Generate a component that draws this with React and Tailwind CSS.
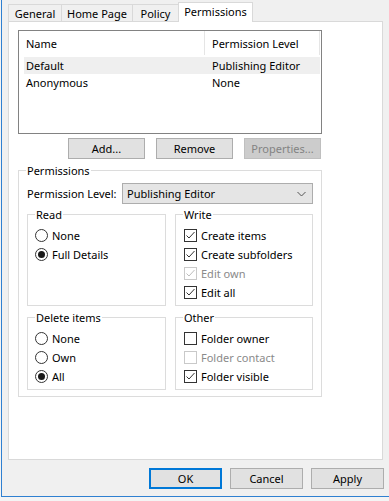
import React from "react";

function Check({ checked, disabled }) {
  return (
    <span
      className={`w-[13px] h-[13px] border ${
        disabled ? "border-[#c9c9c9]" : "border-[#333333]"
      } bg-white flex items-center justify-center shrink-0`}
    >
      {checked && (
        <svg width="11" height="11" viewBox="0 0 11 11">
          <polyline
            points="1.5,5.5 4,8 9.5,2"
            fill="none"
            stroke={disabled ? "#bdbdbd" : "#333333"}
            strokeWidth="1"
          />
        </svg>
      )}
    </span>
  );
}

function Radio({ checked }) {
  return (
    <span className="w-[13px] h-[13px] rounded-full border border-[#333333] bg-white flex items-center justify-center shrink-0">
      {checked && <span className="w-[7px] h-[7px] rounded-full bg-[#1a1a1a]" />}
    </span>
  );
}

function Item({ children, label, disabled, pl }) {
  return (
    <div className={`h-[19px] flex items-center gap-[4px] ${pl}`}>
      {children}
      <span className={disabled ? "text-[#8a8a8a]" : "text-black"}>{label}</span>
    </div>
  );
}

function Group({ label, className, children }) {
  return (
    <div className={`relative border border-[#dcdcdc] ${className}`}>
      <span className="absolute left-[7px] -top-[8px] px-[1px] bg-white leading-[15px]">
        {label}
      </span>
      {children}
    </div>
  );
}

function Btn({ children, className }) {
  return (
    <div
      className={`h-[21px] flex items-center justify-center border ${className}`}
    >
      {children}
    </div>
  );
}

export default function App() {
  return (
    <div className="w-[389px] h-[501px] bg-[#f4f4f4] font-['Noto_Sans',sans-serif] text-[11px] leading-[15px] text-black overflow-hidden">
      <div className="ml-[1px] w-[388px] h-[497px] border-l border-b border-[#2f80d1] bg-[#f0f0f0] flex flex-col">
        {/* Tabs */}
        <div className="h-[21px] pl-[6px] flex items-end relative z-10">
          <div className="w-[53px] h-[17px] border-t border-l border-[#d9d9d9] flex items-center justify-center">
            General
          </div>
          <div className="w-[71px] h-[17px] border-t border-l border-[#d9d9d9] flex items-center justify-center">
            Home Page
          </div>
          <div className="w-[46px] h-[17px] border-t border-l border-[#d9d9d9] flex items-center justify-center">
            Policy
          </div>
          <div className="w-[75px] h-[20px] -mb-[1px] border-t border-l border-r border-[#d9d9d9] bg-white flex items-center justify-center pb-[2px]">
            Permissions
          </div>
        </div>

        {/* Panel */}
        <div className="ml-[6px] w-[375px] h-[439px] border border-[#d9d9d9] bg-white flex flex-col">
          {/* List */}
          <div className="ml-[9px] mt-[8px] w-[304px] h-[104px] border border-[#828282] flex flex-col">
            <div className="h-[26px] flex">
              <div className="w-[185px] pl-[7px] pt-[5px]">Name</div>
              <div className="w-[1px] h-[24px] bg-[#e5e5e5]" />
              <div className="w-[114px] pl-[7px] pt-[5px]">Permission Level</div>
              <div className="w-[1px] h-[24px] bg-[#e5e5e5]" />
            </div>
            <div className="ml-[5px] w-[296px] h-[17px] flex items-center bg-[#efefef]">
              <div className="w-[180px] pl-[2px]">Default</div>
              <div className="pl-[8px]">Publishing Editor</div>
            </div>
            <div className="ml-[5px] w-[296px] h-[17px] flex items-center">
              <div className="w-[180px] pl-[2px]">Anonymous</div>
              <div className="pl-[8px]">None</div>
            </div>
          </div>

          {/* Buttons */}
          <div className="ml-[59px] mt-[4px] flex gap-[11px]">
            <Btn className="w-[77px] bg-[#e1e1e1] border-[#adadad]">Add...</Btn>
            <Btn className="w-[77px] bg-[#e1e1e1] border-[#adadad]">Remove</Btn>
            <Btn className="w-[77px] bg-[#cccccc] border-[#bfbfbf] text-[#838383]">
              Properties...
            </Btn>
          </div>

          {/* Permissions group */}
          <Group label="Permissions" className="ml-[9px] mt-[11px] w-[304px] h-[227px] flex flex-col">
            <div className="mt-[12px] ml-[8px] flex items-center">
              <div className="w-[95px]">Permission Level:</div>
              <div className="w-[191px] h-[21px] border border-[#adadad] bg-[#e5e5e5] flex items-center justify-between pl-[4px] pr-[6px]">
                <span>Publishing Editor</span>
                <svg width="9" height="6" viewBox="0 0 9 6">
                  <polyline points="0.5,1 4.5,5 8.5,1" fill="none" stroke="#555555" strokeWidth="1" />
                </svg>
              </div>
            </div>

            <div className="mt-[10px] ml-[8px] flex gap-[9px]">
              <Group label="Read" className="w-[139px] h-[92px] pt-[11px]">
                <Item label="None" pl="pl-[7px]">
                  <Radio />
                </Item>
                <Item label="Full Details" pl="pl-[7px]">
                  <Radio checked />
                </Item>
              </Group>
              <Group label="Write" className="w-[138px] h-[92px] pt-[11px]">
                <Item label="Create items" pl="pl-[8px]">
                  <Check checked />
                </Item>
                <Item label="Create subfolders" pl="pl-[8px]">
                  <Check checked />
                </Item>
                <Item label="Edit own" pl="pl-[8px]" disabled>
                  <Check checked disabled />
                </Item>
                <Item label="Edit all" pl="pl-[8px]">
                  <Check checked />
                </Item>
              </Group>
            </div>

            <div className="mt-[11px] ml-[8px] flex gap-[9px]">
              <Group label="Delete items" className="w-[139px] h-[73px] pt-[11px]">
                <Item label="None" pl="pl-[7px]">
                  <Radio />
                </Item>
                <Item label="Own" pl="pl-[7px]">
                  <Radio />
                </Item>
                <Item label="All" pl="pl-[7px]">
                  <Radio checked />
                </Item>
              </Group>
              <Group label="Other" className="w-[138px] h-[73px] pt-[11px]">
                <Item label="Folder owner" pl="pl-[8px]">
                  <Check />
                </Item>
                <Item label="Folder contact" pl="pl-[8px]" disabled>
                  <Check disabled />
                </Item>
                <Item label="Folder visible" pl="pl-[8px]">
                  <Check checked />
                </Item>
              </Group>
            </div>
          </Group>
        </div>

        {/* Bottom buttons */}
        <div className="mt-[8px] pr-[5px] flex justify-end gap-[8px]">
          <Btn className="w-[73px] bg-[#e1e1e1] border-2 border-[#0078d7]">OK</Btn>
          <Btn className="w-[73px] bg-[#e1e1e1] border-[#adadad]">Cancel</Btn>
          <Btn className="w-[73px] bg-[#e1e1e1] border-[#adadad]">Apply</Btn>
        </div>
      </div>
    </div>
  );
}
